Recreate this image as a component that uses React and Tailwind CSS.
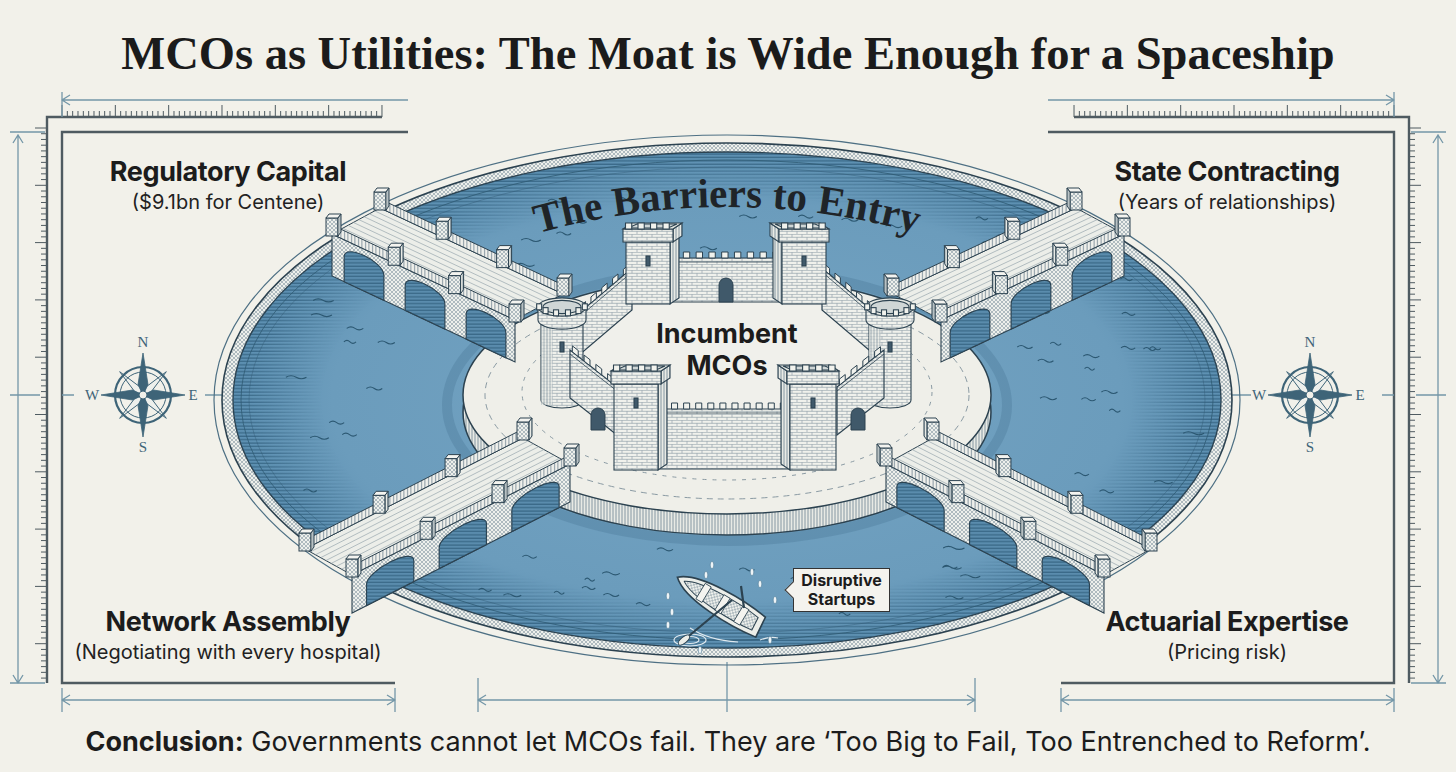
import React from 'react';

const INK = '#2c4250';
const FRAME = '#4f5b61';
const THIN = '#7497a8';

function rng(seed) {
	let s = seed;
	return () => {
		s = (s * 16807) % 2147483647;
		return (s - 1) / 2147483646;
	};
}

const P = (pts) => pts.map((p) => `${p[0].toFixed(1)},${p[1].toFixed(1)}`).join(' ');
const add = (a, b, k = 1) => [a[0] + b[0] * k, a[1] + b[1] * k];
const lerp = (a, b, t) => [a[0] + (b[0] - a[0]) * t, a[1] + (b[1] - a[1]) * t];

function merlons(a, b, n, h = 6) {
	let d = '';
	for (let i = 0; i < n; i++) {
		const p0 = lerp(a, b, (i + 0.2) / n);
		const p1 = lerp(a, b, (i + 0.7) / n);
		d += `M${p0[0]} ${p0[1]}L${p0[0]} ${p0[1] - h}L${p1[0]} ${p1[1] - h}L${p1[0]} ${p1[1]}Z`;
	}
	return d;
}

function gatePath(x, y, w, hh) {
	return `M${x - w} ${y}V${y - hh + w}A${w} ${w} 0 0 1 ${x + w} ${y - hh + w}V${y}Z`;
}

function Defs() {
	return (
		<defs>
			<pattern id="brick" width="10" height="6" patternUnits="userSpaceOnUse">
				<rect width="10" height="6" fill="#f0f1ec" />
				<path d="M0 0.3H10M0 3.3H10M2 0.3V3.3M7 3.3V6.3" stroke="#8494a0" strokeWidth="0.6" />
			</pattern>
			<pattern id="vl" width="3" height="4" patternUnits="userSpaceOnUse">
				<rect width="3" height="4" fill="#e8eae5" />
				<path d="M1 0V4" stroke="#6b8292" strokeWidth="0.8" />
			</pattern>
			<pattern id="hl" width="6" height="3.4" patternUnits="userSpaceOnUse">
				<path d="M0 1H6" stroke="#2c5a77" strokeWidth="0.9" />
			</pattern>
			<pattern id="cross" width="4" height="4" patternUnits="userSpaceOnUse">
				<rect width="4" height="4" fill="#eef0ec" />
				<path d="M0 0L4 4M4 0L0 4" stroke="#6e8593" strokeWidth="0.5" />
			</pattern>
			<pattern id="bal" width="3.5" height="10" patternUnits="userSpaceOnUse">
				<rect width="3.5" height="10" fill="#f0f1ec" />
				<path d="M1.5 0V10" stroke="#5c7382" strokeWidth="0.8" />
			</pattern>
			<radialGradient id="waterG" cx="0.5" cy="0.5" r="0.5">
				<stop offset="0" stopColor="#74a4c3" />
				<stop offset="0.8" stopColor="#6b9cbc" />
				<stop offset="1" stopColor="#5c8fb1" />
			</radialGradient>
			<radialGradient id="edgeG" cx="0.5" cy="0.5" r="0.5">
				<stop offset="0.82" stopColor="#000" />
				<stop offset="0.97" stopColor="#fff" />
				<stop offset="1" stopColor="#fff" />
			</radialGradient>
			<mask id="edgeM">
				<ellipse cx="727" cy="400" rx="494" ry="248" fill="url(#edgeG)" />
			</mask>
			<path id="arc" d="M528 236 Q727 178 926 236" fill="none" />
		</defs>
	);
}

function FrameSide() {
	const top = [];
	for (let i = 0; i <= 60; i++) {
		const x = 62 + i * 5.333;
		top.push(<line key={i} x1={x} x2={x} y1={i % 10 === 0 ? 105 : 111} y2={117} />);
	}
	const left = [];
	for (let i = 0; i <= 96; i++) {
		const y = 128 + i * 5.73;
		if (y > 683) break;
		left.push(<line key={i} x1={i % 10 === 0 ? 35 : 41} x2={47} y1={y} y2={y} />);
	}
	return (
		<g>
			<g stroke={FRAME} strokeWidth="1">
				{top}
				{left}
			</g>
			<path d="M382 117H47V683" stroke={FRAME} strokeWidth="2.4" fill="none" />
			<path d="M408 132H62V683H395" stroke={FRAME} strokeWidth="2.4" fill="none" />
			<g stroke={THIN} strokeWidth="1.3" fill="none">
				<path d="M62 100H408M70 95L62 100L70 105M62 92V117" />
				<path d="M18 135V683M13 143L18 135L23 143M13 675L18 683L23 675M10 132H45M10 683H45" />
				<path d="M62 700H395M70 695L62 700L70 705M387 695L395 700L387 705M62 688V712M395 688V712" />
				<path d="M10 395H40M62 395H74M205 395H228" />
			</g>
		</g>
	);
}

function Compass({ cx, cy }) {
	const kite = (ang, len, w) => {
		const a = (ang * Math.PI) / 180;
		const ux = Math.sin(a);
		const uy = -Math.cos(a);
		const px = -uy;
		const py = ux;
		return P([
			[cx, cy],
			[cx + px * w + ux * len * 0.25, cy + py * w + uy * len * 0.25],
			[cx + ux * len, cy + uy * len],
			[cx - px * w + ux * len * 0.25, cy - py * w + uy * len * 0.25],
		]);
	};
	const col = '#3e6478';
	return (
		<g>
			{[45, 135, 225, 315].map((a) => (
				<polygon key={a} points={kite(a, 33, 3.5)} fill="#eef0ec" stroke={col} strokeWidth="1" />
			))}
			<circle cx={cx} cy={cy} r="28" fill="none" stroke={col} strokeWidth="2.2" />
			<circle cx={cx} cy={cy} r="23" fill="none" stroke={col} strokeWidth="1" />
			{[0, 90, 180, 270].map((a) => (
				<polygon key={a} points={kite(a, 42, 5)} fill={col} stroke={col} strokeWidth="0.8" />
			))}
			<circle cx={cx} cy={cy} r="4" fill="#f2f1ea" stroke={col} strokeWidth="1" />
			<g fill={col} fontFamily="Liberation Serif, serif" fontSize="15" textAnchor="middle">
				<text x={cx} y={cy - 48}>N</text>
				<text x={cx} y={cy + 57}>S</text>
				<text x={cx - 51} y={cy + 5}>W</text>
				<text x={cx + 50} y={cy + 5}>E</text>
			</g>
		</g>
	);
}

function Post({ p }) {
	const [x, y] = p;
	return (
		<g stroke={INK} strokeWidth="1">
			<rect x={x - 6} y={y - 16} width="12" height="18" fill="url(#cross)" />
			<polygon points={P([[x - 6, y - 16], [x + 6, y - 16], [x + 9, y - 20], [x - 3, y - 20]])} fill="#f4f4f0" />
			<polygon points={P([[x + 6, y - 16], [x + 9, y - 20], [x + 9, y - 2], [x + 6, y + 2]])} fill="url(#vl)" />
		</g>
	);
}

function Bridge({ p0, p1, d, h }) {
	const f0 = add(p0, d);
	const f1 = add(p1, d);
	const dn = [0, h];
	const up = [0, -9];
	const lines = [];
	for (let k = 1; k < 9; k++) {
		const a = add(p0, d, k / 9);
		const b = add(p1, d, k / 9);
		lines.push(`M${a[0]} ${a[1]}L${b[0]} ${b[1]}`);
	}
	const arches = [];
	for (let i = 0; i < 3; i++) {
		const a = lerp(p0, p1, (i + 0.2) / 3);
		const b = lerp(p0, p1, (i + 0.85) / 3);
		arches.push(
			`M${a[0]} ${a[1] + h}L${a[0]} ${a[1] + 17}C${a[0]} ${a[1] + 3} ${b[0]} ${b[1] + 3} ${b[0]} ${b[1] + 17}L${b[0]} ${b[1] + h}Z`,
		);
	}
	const ts = [0, 0.34, 0.67, 1];
	return (
		<g>
			<polygon points={P([p0, p1, f1, f0])} fill="#eceee9" stroke={INK} strokeWidth="1" />
			<path d={lines.join('')} stroke="#98a6ae" strokeWidth="0.7" />
			<polygon points={P([f0, f1, add(f1, up), add(f0, up)])} fill="url(#bal)" stroke={INK} strokeWidth="1" />
			{ts.map((t) => (
				<Post key={`f${t}`} p={lerp(f0, f1, t)} />
			))}
			<polygon points={P([p0, p1, add(p1, dn), add(p0, dn)])} fill="url(#cross)" stroke={INK} strokeWidth="1.1" />
			<path d={arches.join('')} fill="#5a8cad" stroke={INK} strokeWidth="1.2" />
			<path d={arches.join('')} fill="url(#hl)" />
			<polygon points={P([p0, p1, add(p1, up), add(p0, up)])} fill="url(#bal)" stroke={INK} strokeWidth="1" />
			{ts.map((t) => (
				<Post key={`n${t}`} p={lerp(p0, p1, t)} />
			))}
		</g>
	);
}

function Wall({ a, b, h, n, gate }) {
	const bl = [a[0], a[1] + h];
	const br = [b[0], b[1] + h];
	return (
		<g>
			<polygon points={P([a, b, br, bl])} fill="url(#brick)" stroke={INK} strokeWidth="1.2" />
			<path d={`M${a[0]} ${a[1] + 4}L${b[0]} ${b[1] + 4}`} stroke={INK} strokeWidth="0.8" />
			<path d={merlons(a, b, n)} fill="#f1f2ed" stroke={INK} strokeWidth="1" />
			{gate && <path d={gatePath(...gate)} fill="#40596a" stroke={INK} strokeWidth="1" />}
		</g>
	);
}

function Tower({ x, y, w, h, side = 1 }) {
	const dx = 9 * side;
	const dy = -6;
	const sx = side > 0 ? x + w : x;
	const py = y - 13;
	const psx = side > 0 ? x + w + 3 : x - 3;
	const tl = [x - 3, py];
	const tr = [x + w + 3, py];
	return (
		<g stroke={INK} strokeWidth="1.1">
			<polygon points={P([[sx, y], [sx + dx, y + dy], [sx + dx, y + h + dy], [sx, y + h]])} fill="url(#vl)" />
			<rect x={x} y={y} width={w} height={h} fill="url(#brick)" />
			<polygon points={P([[psx, py], [psx + dx, py + dy], [psx + dx, y + dy], [psx, y]])} fill="url(#vl)" />
			<rect x={x - 3} y={py} width={w + 6} height="13" fill="url(#brick)" />
			<polygon points={P([tl, tr, add(tr, [dx, dy]), add(tl, [dx, dy])])} fill="#e4e7e2" />
			<polygon
				points={P([add(tl, [5, -1]), add(tr, [-5, -1]), add(tr, [dx - 5, dy + 1]), add(tl, [dx + 5, dy + 1])])}
				fill="#cfd6d6"
			/>
			<path d={merlons(tl, tr, 4)} fill="#f1f2ed" />
			<rect x={x + w / 2 - 2} y={y + 14} width="4" height="10" fill="#40596a" />
		</g>
	);
}

function RoundTower({ cx, top, bottom, r }) {
	const ry = r * 0.38;
	const pr = r + 3;
	const pry = pr * 0.38;
	const pt = top - 13;
	const m = [];
	for (let i = 0; i < 6; i++) {
		const t = Math.PI * (0.1 + (i * 0.8) / 5);
		const x = cx - pr * Math.cos(t);
		const y = pt + pry * Math.sin(t);
		m.push(<rect key={i} x={x - 2.5} y={y - 6} width="5" height="6" fill="#f1f2ed" />);
	}
	return (
		<g stroke={INK} strokeWidth="1.1">
			<path d={`M${cx - r} ${top}V${bottom}A${r} ${ry} 0 0 0 ${cx + r} ${bottom}V${top}Z`} fill="url(#brick)" />
			<rect x={cx - r} y={top} width={r * 0.55} height={bottom - top + ry * 0.6} fill="url(#vl)" opacity="0.7" stroke="none" />
			<path d={`M${cx - pr} ${pt}V${top}A${pr} ${pry} 0 0 0 ${cx + pr} ${top}V${pt}Z`} fill="url(#brick)" />
			<ellipse cx={cx} cy={pt} rx={pr} ry={pry} fill="#e4e7e2" />
			<ellipse cx={cx} cy={pt} rx={pr - 5} ry={pry - 2.5} fill="#cfd6d6" />
			{m}
			<rect x={cx - 2} y={top + 22} width="4" height="10" fill="#40596a" />
		</g>
	);
}

function Castle() {
	return (
		<g>
			<polygon
				points={P([[632, 300], [815, 300], [880, 345], [880, 400], [790, 420], [660, 420], [575, 400], [575, 345]])}
				fill="#f0f0eb"
			/>
			<Wall a={[668, 258]} b={[783, 258]} h={44} n={9} gate={[726, 302, 7, 24]} />
			<Wall a={[578, 314]} b={[632, 268]} h={42} n={5} />
			<Wall a={[822, 268]} b={[876, 314]} h={42} n={5} />
			<Tower x={626} y={242} w={44} h={62} side={1} />
			<Tower x={782} y={242} w={44} h={62} side={-1} />
			<RoundTower cx={562} top={320} bottom={400} r={21} />
			<RoundTower cx={890} top={320} bottom={400} r={21} />
			<Wall a={[570, 350]} b={[617, 387]} h={48} n={4} gate={[598, 430, 7, 22]} />
			<Wall a={[837, 387]} b={[884, 350]} h={48} n={4} gate={[858, 430, 7, 22]} />
			<Wall a={[657, 409]} b={[790, 409]} h={60} n={11} />
			<Tower x={614} y={384} w={44} h={86} side={1} />
			<Tower x={790} y={384} w={46} h={86} side={-1} />
		</g>
	);
}

function Boat() {
	const drops = [
		[668, 596], [672, 612], [706, 575], [712, 565], [752, 572], [760, 584], [775, 600], [668, 625], [770, 640], [700, 650],
	];
	return (
		<g>
			<g stroke="#dfe9ef" strokeWidth="1.2" fill="none">
				<ellipse cx="690" cy="640" rx="16" ry="6" />
				<ellipse cx="690" cy="640" rx="9" ry="3.5" />
				<path d="M690 628q18 12 48 14M760 640q10-4 18-2" />
			</g>
			<g transform="translate(722 604) rotate(31)">
				<path d="M-52 0C-35 -16 20 -15 44 -11L46 11C20 15 -35 16 -52 0Z" fill="#eceee9" stroke={INK} strokeWidth="1.6" />
				<path d="M-44 0C-30 -10 18 -10 38 -7L39 7C18 10 -30 10 -44 0Z" fill="url(#cross)" stroke={INK} strokeWidth="1" />
				{[-22, 0, 22].map((x) => (
					<rect key={x} x={x - 3} y="-9" width="7" height="18" fill="#f4f4f0" stroke={INK} strokeWidth="0.8" />
				))}
			</g>
			<path d="M684 640L732 600M741 586L744 608" stroke={INK} strokeWidth="2.2" />
			<ellipse cx="684" cy="640" rx="7" ry="3" transform="rotate(-40 684 640)" fill="#eceee9" stroke={INK} />
			{drops.map(([x, y]) => (
				<ellipse key={`${x}-${y}`} cx={x} cy={y} rx="1.8" ry="3.6" fill="#eef4f7" stroke="#4b7893" strokeWidth="0.6" />
			))}
		</g>
	);
}

function Moat() {
	const rand = rng(11);
	const waves = [];
	let guard = 0;
	while (waves.length < 80 && guard < 3000) {
		guard++;
		const x = 240 + rand() * 980;
		const y = 160 + rand() * 480;
		const e1 = ((x - 727) / 470) ** 2 + ((y - 400) / 226) ** 2;
		const e2 = ((x - 727) / 300) ** 2 + ((y - 400) / 150) ** 2;
		if (e1 < 1 && e2 > 1) waves.push([x, y, 10 + rand() * 12]);
	}
	const wd = waves.map(([x, y, w]) => `M${x.toFixed(1)} ${y.toFixed(1)}q${w / 4} -3 ${w / 2} 0t${w / 2} 0`).join('');
	return (
		<g>
			<ellipse cx="727" cy="400" rx="513" ry="265" fill="none" stroke="#4e7084" strokeWidth="1.2" />
			<ellipse cx="727" cy="400" rx="505" ry="257" fill="url(#cross)" stroke={INK} strokeWidth="1.6" />
			<ellipse cx="727" cy="400" rx="494" ry="248" fill="url(#waterG)" stroke={INK} strokeWidth="1.4" />
			<ellipse cx="727" cy="400" rx="494" ry="248" fill="url(#hl)" mask="url(#edgeM)" />
			<ellipse cx="727" cy="400" rx="486" ry="240" fill="none" stroke="#2f5a74" strokeWidth="0.8" />
			<ellipse cx="727" cy="400" rx="478" ry="233" fill="none" stroke="#2f5a74" strokeWidth="0.6" opacity="0.7" />
			<path d={wd} stroke="#2c5872" strokeWidth="1.1" fill="none" />
			<ellipse cx="727" cy="405" rx="280" ry="136" fill="none" stroke="#3b6986" strokeWidth="10" opacity="0.25" />
			<ellipse cx="727" cy="412" rx="264" ry="123" fill="url(#vl)" stroke={INK} strokeWidth="1.5" />
			<ellipse cx="727" cy="395" rx="264" ry="119" fill="#efefe9" stroke={INK} strokeWidth="1.5" />
			<ellipse cx="727" cy="395" rx="242" ry="104" fill="none" stroke="#8a9aa3" strokeDasharray="6 5" />
			<ellipse cx="727" cy="392" rx="205" ry="88" fill="none" stroke="#8a9aa3" strokeDasharray="4 6" />
		</g>
	);
}

function Drawing() {
	return (
		<svg className="absolute inset-0" width="1456" height="772" viewBox="0 0 1456 772">
			<Defs />
			<FrameSide />
			<g transform="matrix(-1 0 0 1 1456 0)">
				<FrameSide />
			</g>
			<g stroke={THIN} strokeWidth="1.3" fill="none">
				<path d="M478 700H975M486 695L478 700L486 705M967 695L975 700L967 705M478 678V712M975 678V712M727 662V712" />
			</g>
			<Compass cx={143} cy={395} />
			<Compass cx={1310} cy={395} />
			<Moat />
			<Bridge p0={[332, 234]} p1={[515, 320]} d={[48, -26]} h={42} />
			<Bridge p0={[352, 575]} p1={[570, 464]} d={[-47, -26]} h={38} />
			<g transform="matrix(-1 0 0 1 1456 0)">
				<Bridge p0={[332, 234]} p1={[515, 320]} d={[48, -26]} h={42} />
				<Bridge p0={[352, 575]} p1={[570, 464]} d={[-47, -26]} h={38} />
			</g>
			<Castle />
			<Boat />
			<text fontFamily="Liberation Serif, serif" fontWeight="700" fontSize="41" fill="#1f2428">
				<textPath href="#arc" startOffset="50%" textAnchor="middle">
					The Barriers to Entry
				</textPath>
			</text>
		</svg>
	);
}

function Label({ title, sub }) {
	return (
		<div className="flex flex-col items-center">
			<span className="text-[27px] font-bold leading-[32px] tracking-[-0.015em] text-[#1c1c1c]">{title}</span>
			<span className="text-[20px] leading-[28px] text-[#222]">{sub}</span>
		</div>
	);
}

function App() {
	return (
		<div className="relative h-[772px] w-[1456px] overflow-hidden bg-[#f2f1ea] font-['Inter',sans-serif]">
			<Drawing />
			<div className="relative flex h-full flex-col">
				<h1 className="flex h-[96px] items-center justify-center pt-[12px] font-['Liberation_Serif',serif] text-[46.5px] font-bold text-[#1b1b1b]">
					MCOs as Utilities: The Moat is Wide Enough for a Spaceship
				</h1>
				<div className="grid flex-1 grid-cols-[456px_1fr_458px]">
					<div className="flex flex-col justify-between pb-[49px] pt-[60px] text-center">
						<Label title="Regulatory Capital" sub="($9.1bn for Centene)" />
						<Label title="Network Assembly" sub="(Negotiating with every hospital)" />
					</div>
					<div className="relative flex flex-col items-center pt-[222px]">
						<p className="text-center text-[27px] font-bold leading-[32px] text-[#1c1c1c]">
							Incumbent
							<br />
							MCOs
						</p>
						<div className="absolute left-[337px] top-[472px] flex h-[44px] w-[97px] flex-col items-center justify-center border-[1.5px] border-[#333] bg-[#f4f3ee] text-[16px] font-bold leading-[19px] text-[#1c1c1c]">
							<span className="absolute left-[-7px] top-[15px] h-3 w-3 rotate-45 border-b-[1.5px] border-l-[1.5px] border-[#333] bg-[#f4f3ee]" />
							<span className="relative">Disruptive</span>
							<span className="relative">Startups</span>
						</div>
					</div>
					<div className="flex flex-col justify-between pb-[49px] pt-[60px] text-center">
						<Label title="State Contracting" sub="(Years of relationships)" />
						<Label title="Actuarial Expertise" sub="(Pricing risk)" />
					</div>
				</div>
				<p className="flex h-[57px] items-center justify-center pb-[2px] text-[27px] text-[#1c1c1c]">
					<span className="font-bold">Conclusion:</span>
					<span>&nbsp;Governments cannot let MCOs fail. They are ‘Too Big to Fail, Too Entrenched to Reform’.</span>
				</p>
			</div>
		</div>
	);
}

export default App;
